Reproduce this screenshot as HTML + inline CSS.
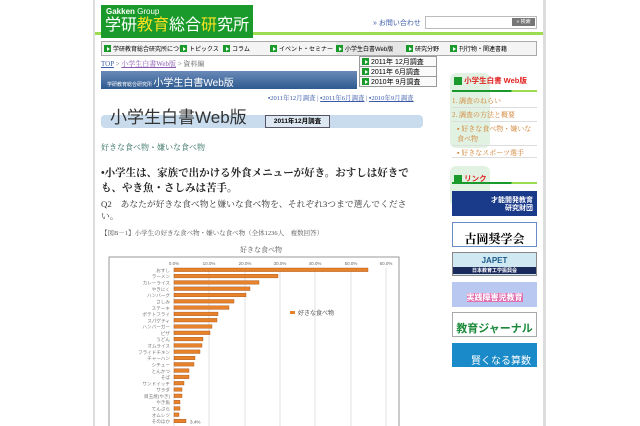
<!DOCTYPE html><html><head><meta charset="utf-8"><style>
*{margin:0;padding:0;box-sizing:border-box}
body{width:640px;height:426px;overflow:hidden;background:#fff;font-family:"Liberation Serif","Noto Serif CJK SC",serif;position:relative}
.a{position:absolute}
.sans{font-family:"Liberation Sans","Noto Sans CJK JP",sans-serif}
.nav{top:41px;left:101px;width:436px;height:15px;border:1px solid #aaa;background:#f4f4f4;font-size:6px;display:flex;align-items:center;overflow:hidden}
.nav span{display:flex;align-items:center;white-space:nowrap;overflow:hidden}
.ic{display:inline-block;flex:none;width:7px;height:7px;background:#1a9a2a;margin-right:2px;position:relative}
.ic:after{content:"";position:absolute;left:2.5px;top:1.5px;border-left:3px solid #fff;border-top:2px solid transparent;border-bottom:2px solid transparent}
.dd{left:359px;width:78px;height:11px;border:1px solid #999;background:#fafafa;font-size:7px;display:flex;align-items:center;padding-left:2px}
.sb{font-size:7px;color:#d08030;border-bottom:1px solid #ddd}
</style></head><body>
<div class="a" style="left:93px;top:0;width:2px;height:426px;background:#ddd"></div>
<div class="a" style="left:543px;top:0;width:3px;height:426px;background:#ddd"></div>
<div class="a" style="left:95px;top:32px;width:448px;height:3px;background:#9cdc50"></div>
<div class="a sans" style="left:101px;top:5px;width:152px;height:33px;background:#1a9a2a;color:#fff;white-space:nowrap;overflow:hidden">
<div style="font-size:8px;font-weight:bold;padding:2px 0 0 5px;line-height:10px">Gakken <span style="font-weight:normal">Group</span></div>
<div style="font-size:16px;line-height:18px;padding-left:4px">学研<span style="color:#f8e020">教育</span>総合<span style="color:#f8e020">研</span>究所</div></div>
<div class="a sans" style="left:373px;top:18px;font-size:7px;color:#3a5aa8">» お問い合わせ</div>
<div class="a" style="left:425px;top:16px;width:112px;height:13px;border:1px solid #bbb;background:#fff"></div>
<div class="a sans" style="left:512px;top:18px;width:23px;height:8px;background:#777;color:#fff;font-size:5px;text-align:center">» 検索</div>
<div class="a nav sans">
<span style="width:78px;padding-left:2px"><i class="ic"></i>学研教育総合研究所について</span>
<span style="width:43px"><i class="ic"></i>トピックス</span>
<span style="width:47px"><i class="ic"></i>コラム</span>
<span style="width:66px"><i class="ic"></i>イベント・セミナー</span>
<span style="width:70px;background:#e6e6e6;height:13px"><i class="ic"></i>小学生白書Web版</span>
<span style="width:44px"><i class="ic"></i>研究分野</span>
<span><i class="ic"></i>刊行物・関連書籍</span></div>
<div class="a dd sans" style="top:56px"><i class="ic"></i>2011年 12月調査</div>
<div class="a dd sans" style="top:66px"><i class="ic"></i>2011年 6月調査</div>
<div class="a dd sans" style="top:76px"><i class="ic"></i>2010年 9月調査</div>
<div class="a" style="left:101px;top:59px;font-size:7px;color:#666"><u style="color:#3a5aa8">TOP</u> &gt; <u style="color:#8a5ab0">小学生白書Web版</u> &gt; 資料編</div>
<div class="a sans" style="left:101px;top:71px;width:256px;height:18px;background:linear-gradient(#6a8ab8,#2e5a90);color:#fff;font-size:10px;padding:3px 0 0 6px"><span style="font-size:5px">学研教育総合研究所 </span>小学生白書Web版</div>
<div class="a" style="left:268px;top:93px;font-size:6.5px;color:#3a5aa8;white-space:nowrap">▪2011年12月調査 | <u>▪2011年6月調査</u> | <u>▪2010年9月調査</u></div>
<div class="a" style="left:101px;top:115px;width:322px;height:13px;background:#c8dcee;border-radius:4px"></div>
<div class="a sans" style="left:110px;top:108px;font-size:17px;color:#333;line-height:20px">小学生白書Web版</div>
<div class="a sans" style="left:265px;top:115px;width:65px;height:13px;border:1px solid #556;background:#dde8f2;font-size:6.5px;font-weight:bold;text-align:center;line-height:11px">2011年12月調査</div>
<div class="a" style="left:101px;top:142px;font-size:8px;color:#2a6a5a">好きな食べ物・嫌いな食べ物</div>
<div class="a" style="left:101px;top:166px;width:320px;font-size:10.5px;line-height:15px;font-weight:bold;color:#222">•小学生は、家族で出かける外食メニューが好き。おすしは好きでも、やき魚・さしみは苦手。</div>
<div class="a" style="left:101px;top:198px;width:318px;font-size:8.8px;line-height:12px;color:#333">Q2　あなたが好きな食べ物と嫌いな食べ物を、それぞれ3つまで選んでください。</div>
<div class="a" style="left:101px;top:228px;font-size:6.5px;color:#555">【図B－1】小学生の好きな食べ物・嫌いな食べ物（全体1236人　複数回答）</div>
<div class="a" style="left:240px;top:245px;font-size:7px;color:#555">好きな食べ物</div>
<svg class="a" style="left:100px;top:255px" width="310" height="171">
<rect x="9" y="2" width="290" height="175" fill="#fff" stroke="#999"/>
<g stroke="#ccc" stroke-width=".6"><line x1="74" y1="13" x2="74" y2="171"/><line x1="109" y1="13" x2="109" y2="171"/><line x1="145" y1="13" x2="145" y2="171"/><line x1="180" y1="13" x2="180" y2="171"/><line x1="215" y1="13" x2="215" y2="171"/><line x1="251" y1="13" x2="251" y2="171"/><line x1="286" y1="13" x2="286" y2="171"/></g>
<g font-size="4.5" fill="#666" font-family="Liberation Sans" text-anchor="middle"><text x="74" y="10">0.0%</text><text x="109" y="10">10.0%</text><text x="145" y="10">20.0%</text><text x="180" y="10">30.0%</text><text x="215" y="10">40.0%</text><text x="251" y="10">50.0%</text><text x="286" y="10">60.0%</text></g>
<g fill="#e8822a" stroke="#a0501a" stroke-width=".4">
<rect x="74" y="13" width="194" height="3.6"/><rect x="74" y="19.3" width="104" height="3.6"/><rect x="74" y="25.6" width="85" height="3.6"/><rect x="74" y="31.9" width="76" height="3.6"/><rect x="74" y="38.2" width="72" height="3.6"/><rect x="74" y="44.5" width="60" height="3.6"/><rect x="74" y="50.8" width="55" height="3.6"/><rect x="74" y="57.1" width="44" height="3.6"/><rect x="74" y="63.4" width="43" height="3.6"/><rect x="74" y="69.7" width="38" height="3.6"/><rect x="74" y="76" width="36" height="3.6"/><rect x="74" y="82.3" width="29" height="3.6"/><rect x="74" y="88.6" width="28" height="3.6"/><rect x="74" y="94.9" width="26" height="3.6"/><rect x="74" y="101.2" width="21" height="3.6"/><rect x="74" y="107.5" width="20" height="3.6"/><rect x="74" y="113.8" width="15" height="3.6"/><rect x="74" y="120.1" width="15" height="3.6"/><rect x="74" y="126.4" width="10" height="3.6"/><rect x="74" y="132.7" width="8" height="3.6"/><rect x="74" y="139" width="8" height="3.6"/><rect x="74" y="145.3" width="6" height="3.6"/><rect x="74" y="151.6" width="6" height="3.6"/><rect x="74" y="157.9" width="5" height="3.6"/><rect x="74" y="164.2" width="12" height="3.6"/></g>
<g font-size="4.6" fill="#777" font-family="Liberation Sans,Noto Sans CJK JP" text-anchor="end">
<text x="70" y="17">おすし</text><text x="70" y="23">ラーメン</text><text x="70" y="29.5">カレーライス</text><text x="70" y="36">やきにく</text><text x="70" y="42">ハンバーグ</text><text x="70" y="48.5">さしみ</text><text x="70" y="55">ステーキ</text><text x="70" y="61">ポテトフライ</text><text x="70" y="67.5">スパゲティ</text><text x="70" y="73.5">ハンバーガー</text><text x="70" y="80">ピザ</text><text x="70" y="86">うどん</text><text x="70" y="92.5">オムライス</text><text x="70" y="99">フライドチキン</text><text x="70" y="105">チャーハン</text><text x="70" y="111.5">シチュー</text><text x="70" y="118">とんかつ</text><text x="70" y="124">そば</text><text x="70" y="130.5">サンドイッチ</text><text x="70" y="136.5">サラダ</text><text x="70" y="143">目玉焼(やき)</text><text x="70" y="149">やき魚</text><text x="70" y="155.5">てんぷら</text><text x="70" y="162">オムレツ</text><text x="70" y="168">そのほか</text></g>
<text x="90" y="168.5" font-size="4.6" fill="#555" font-family="Liberation Sans">3.4%</text>
<rect x="190" y="56" width="5" height="3" fill="#e8822a"/><text x="198" y="60" font-size="6" fill="#555" font-family="Liberation Sans,Noto Sans CJK JP">好きな食べ物</text>
</svg>
<div class="a" style="left:450px;top:73px;width:40px;height:75px;background:#e2f2e2;border-radius:6px"></div>
<div class="a sans" style="left:454px;top:76px;font-size:7.5px;font-weight:bold;color:#e02020;line-height:9px"><span style="display:inline-block;width:8px;height:8px;background:#1a9a2a;vertical-align:middle"></span> 小学生白書 Web版</div>
<div class="a" style="left:452px;top:90px;width:85px;height:2px;background:linear-gradient(90deg,#1a9a2a 70%,#9cdc50 70%)"></div>
<div class="a sb" style="left:452px;top:96px;width:85px;height:12px">1. 調査のねらい</div>
<div class="a sb" style="left:452px;top:110px;width:85px;height:12px">2. 調査の方法と概要</div>
<div class="a sb" style="left:452px;top:124px;width:85px;height:22px;padding-left:5px">▪ 好きな食べ物・嫌いな食べ物</div>
<div class="a sb" style="left:452px;top:148px;width:85px;height:10px;padding-left:5px">▪ 好きなスポーツ選手</div>
<div class="a" style="left:450px;top:166px;width:40px;height:40px;background:#e2f2e2;border-radius:6px"></div>
<div class="a sans" style="left:454px;top:173px;font-size:7.5px;font-weight:bold;color:#e02020"><span style="display:inline-block;width:8px;height:8px;background:#1a9a2a;vertical-align:middle"></span> リンク</div>
<div class="a" style="left:452px;top:182px;width:85px;height:2px;background:linear-gradient(90deg,#1a9a2a 70%,#9cdc50 70%)"></div>
<div class="a sans" style="left:452px;top:191px;width:85px;height:25px;background:#1a3a8a;color:#fff;font-size:7px;font-weight:bold;text-align:right;padding:6px 4px 0 0;line-height:8px">才能開発教育<br>研究財団</div>
<div class="a" style="left:452px;top:222px;width:85px;height:25px;border:1px solid #6a8ac8;background:#fff;font-size:12px;font-weight:bold;text-align:center;padding-top:7px">古岡奨学会</div>
<div class="a sans" style="left:452px;top:252px;width:85px;height:24px;background:#cfe8f2;border:1px solid #888;font-size:8px;font-weight:bold;color:#1a5a8a;text-align:center;padding-top:3px">JAPET<div style="background:#1a2a5a;color:#fff;font-size:5px;margin-top:2px">日本教育工学振興会</div></div>
<div class="a sans" style="left:452px;top:282px;width:85px;height:25px;background:#b8c8f0;font-size:8px;color:#fff;font-weight:bold;text-align:center;padding-top:10px"><span style="background:#e070b0">実践障害児教育</span></div>
<div class="a sans" style="left:452px;top:312px;width:85px;height:25px;border:1px solid #aaa;background:#fff;color:#1a8a3a;font-size:11px;font-weight:bold;text-align:center;padding-top:7px;white-space:nowrap;overflow:hidden">教育ジャーナル</div>
<div class="a sans" style="left:452px;top:343px;width:85px;height:24px;background:#1a8ac8;color:#fff;font-size:10px;text-align:right;padding:9px 6px 0 0">賢くなる算数</div>
</body></html>
